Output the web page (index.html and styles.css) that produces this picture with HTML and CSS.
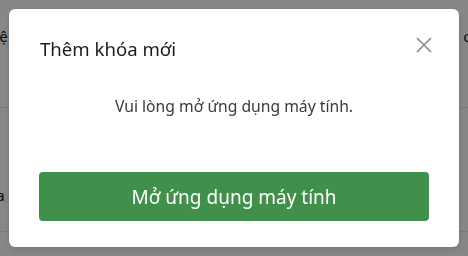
FILE: index.html
```html
<!DOCTYPE html>
<html lang="vi">
<head>
<meta charset="utf-8">
<title>Thêm khóa mới</title>
<link rel="stylesheet" href="styles.css">
</head>
<body>
<div class="page">
  <div class="row row-top">
    <span class="cell-left">Tiệ</span>
    <span class="cell-right">oẫn</span>
  </div>
  <div class="row row-mid">
    <span class="cell-left">ba</span>
  </div>
</div>
<div class="overlay"></div>
<div class="modal" role="dialog" aria-labelledby="modal-title">
  <div class="modal-header">
    <h2 class="modal-title" id="modal-title">Thêm khóa mới</h2>
    <button class="close" aria-label="Đóng">
      <svg width="16" height="16" viewBox="0 0 16 16"><path d="M1 1L15 15M15 1L1 15" stroke="#8a8a8a" stroke-width="1.6" fill="none"/></svg>
    </button>
  </div>
  <div class="modal-body">
    <p class="message">Vui lòng mở ứng dụng máy tính.</p>
  </div>
  <div class="modal-footer">
    <button class="primary">Mở ứng dụng máy tính</button>
  </div>
</div>
</body>
</html>
```
FILE: styles.css
```css
html, body {
  margin: 0;
  padding: 0;
}
body {
  width: 468px;
  height: 256px;
  overflow: hidden;
  background: #ffffff;
  font-family: "Noto Sans", "Open Sans", sans-serif;
  color: #222;
}
.page {
  display: flex;
  flex-direction: column;
}
.row {
  display: flex;
  justify-content: space-between;
  align-items: flex-start;
  border-bottom: 1px solid #e4e4e4;
  font-size: 15px;
  color: #111;
  box-sizing: border-box;
}
.row-top {
  height: 108px;
  padding-top: 26px;
}
.row-mid {
  height: 124px;
  padding-top: 77px;
}
.cell-left {
  margin-left: -13px;
}
.cell-right {
  margin-right: -22px;
}
.overlay {
  position: fixed;
  inset: 0;
  background: rgba(0, 0, 0, 0.47);
}
.modal {
  position: fixed;
  left: 9px;
  top: 9px;
  width: 450px;
  height: 238px;
  box-sizing: border-box;
  background: #fff;
  border-radius: 6px;
  display: flex;
  flex-direction: column;
  box-shadow: 0 2px 6px rgba(0, 0, 0, 0.15);
}
.modal-header {
  display: flex;
  justify-content: space-between;
  align-items: flex-start;
  padding: 27px 27px 0 31px;
}
.modal-title {
  margin: 0;
  font-size: 18.6px;
  line-height: 26px;
  font-weight: 400;
  color: #1c1c1c;
}
.close {
  margin-top: 1px;
  padding: 0;
  border: 0;
  background: none;
  width: 16px;
  height: 16px;
  display: flex;
}
.modal-body {
  padding-top: 33px;
  display: flex;
  justify-content: center;
}
.message {
  margin: 0;
  font-size: 15.7px;
  line-height: 22px;
  color: #3a3a3a;
}
.modal-footer {
  margin-top: auto;
  padding: 0 30px 26px;
}
.primary {
  width: 100%;
  height: 49px;
  border: 0;
  border-radius: 4px;
  background: #40904b;
  color: #fff;
  font-family: "Noto Sans", "Open Sans", sans-serif;
  font-size: 19px;
  font-weight: 400;
  display: flex;
  align-items: center;
  justify-content: center;
}
```
